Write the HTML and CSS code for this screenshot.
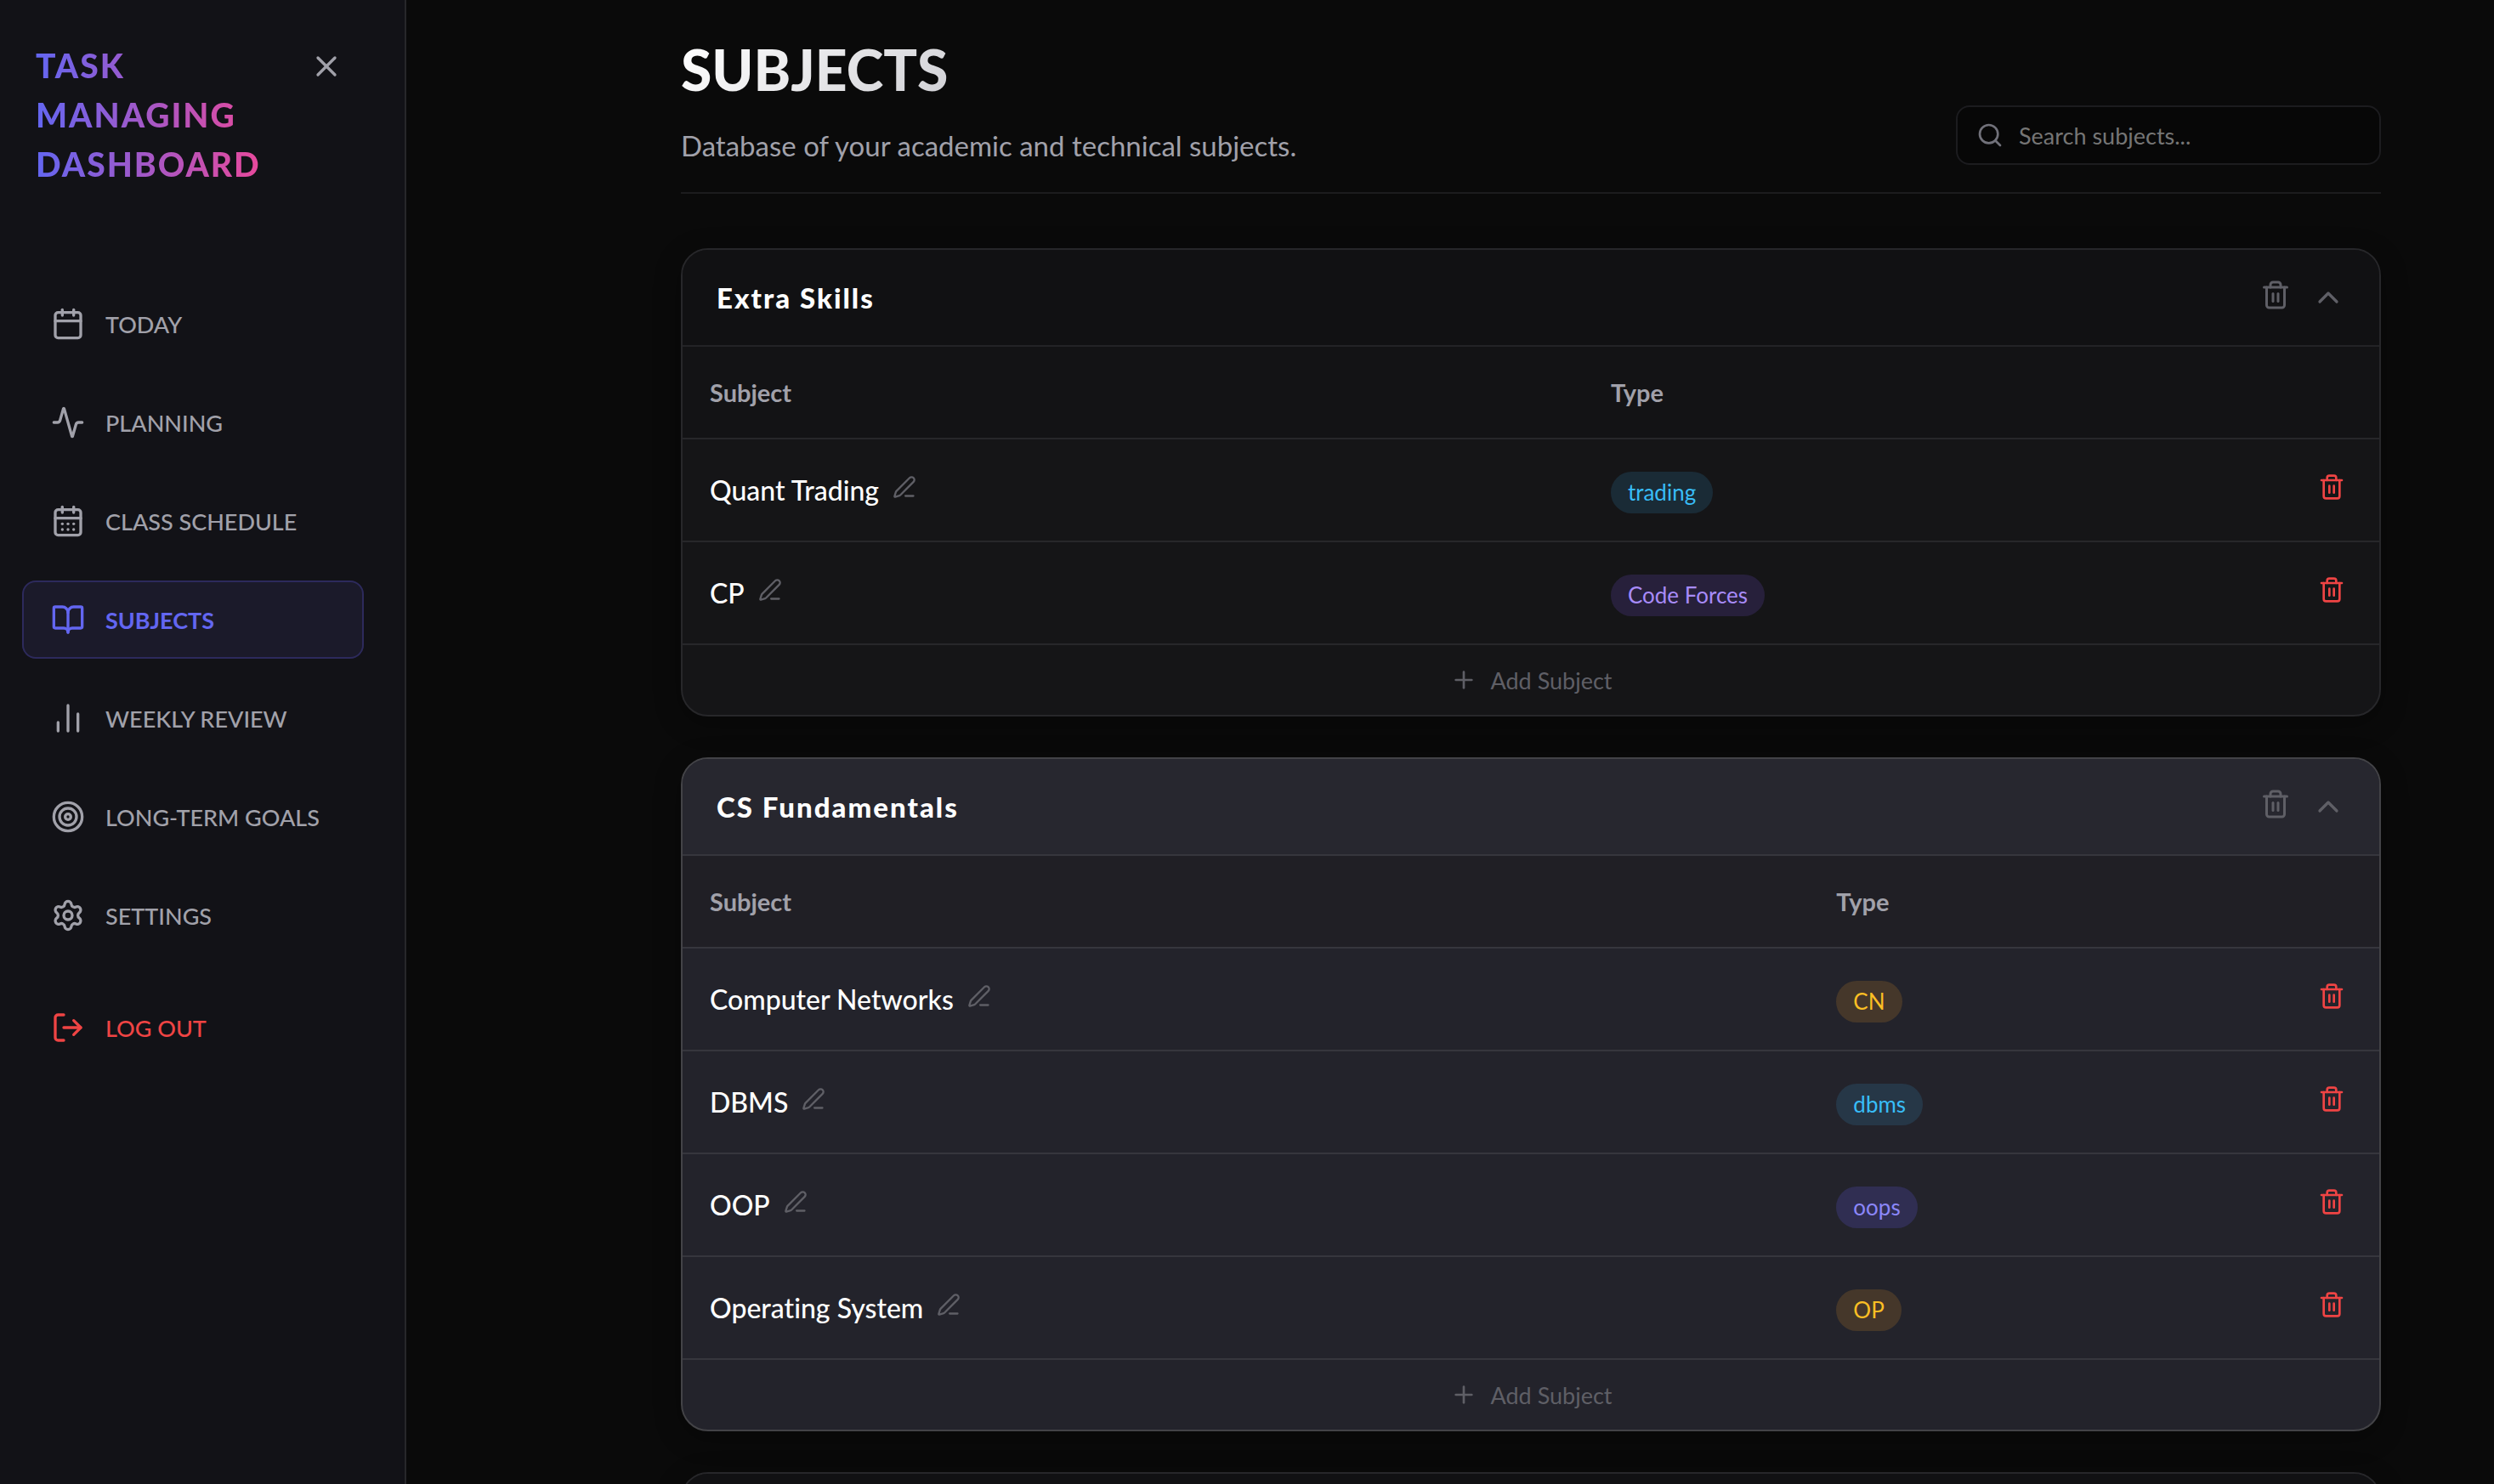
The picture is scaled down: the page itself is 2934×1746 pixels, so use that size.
FILE: index.html
```
<!DOCTYPE html>
<html lang="en">
<head>
<meta charset="utf-8">
<title>Subjects</title>
<link rel="stylesheet" href="styles.css">
</head>
<body>
<!-- icon set -->
<svg class="sprite" aria-hidden="true">
	<symbol id="i-x" viewBox="0 0 24 24"><path d="M18 6 6 18"/><path d="m6 6 12 12"/></symbol>
	<symbol id="i-calendar" viewBox="0 0 24 24"><path d="M8 2v4"/><path d="M16 2v4"/><rect width="18" height="18" x="3" y="4" rx="2"/><path d="M3 10h18"/></symbol>
	<symbol id="i-activity" viewBox="0 0 24 24"><path d="M22 12h-2.48a2 2 0 0 0-1.93 1.46l-2.35 8.36a.25.25 0 0 1-.48 0L9.24 2.18a.25.25 0 0 0-.48 0l-2.35 8.36A2 2 0 0 1 4.49 12H2"/></symbol>
	<symbol id="i-days" viewBox="0 0 24 24"><path d="M8 2v4"/><path d="M16 2v4"/><rect width="18" height="18" x="3" y="4" rx="2"/><path d="M3 10h18"/><path d="M8 14h.01"/><path d="M12 14h.01"/><path d="M16 14h.01"/><path d="M8 18h.01"/><path d="M12 18h.01"/><path d="M16 18h.01"/></symbol>
	<symbol id="i-book" viewBox="0 0 24 24"><path d="M12 7v14"/><path d="M3 18a1 1 0 0 1-1-1V4a1 1 0 0 1 1-1h5a4 4 0 0 1 4 4 4 4 0 0 1 4-4h5a1 1 0 0 1 1 1v13a1 1 0 0 1-1 1h-6a3 3 0 0 0-3 3 3 3 0 0 0-3-3z"/></symbol>
	<symbol id="i-bars" viewBox="0 0 24 24"><path d="M5 21v-6"/><path d="M12 21V3"/><path d="M19 21V9"/></symbol>
	<symbol id="i-target" viewBox="0 0 24 24"><circle cx="12" cy="12" r="10"/><circle cx="12" cy="12" r="6"/><circle cx="12" cy="12" r="2"/></symbol>
	<symbol id="i-settings" viewBox="0 0 24 24"><path d="M9.671 4.136a2.34 2.34 0 0 1 4.659 0 2.34 2.34 0 0 0 3.319 1.915 2.34 2.34 0 0 1 2.33 4.033 2.34 2.34 0 0 0 0 3.831 2.34 2.34 0 0 1-2.33 4.033 2.34 2.34 0 0 0-3.319 1.915 2.34 2.34 0 0 1-4.659 0 2.34 2.34 0 0 0-3.32-1.915 2.34 2.34 0 0 1-2.33-4.033 2.34 2.34 0 0 0 0-3.831A2.34 2.34 0 0 1 6.35 6.051a2.34 2.34 0 0 0 3.319-1.915"/><circle cx="12" cy="12" r="3"/></symbol>
	<symbol id="i-logout" viewBox="0 0 24 24"><path d="m16 17 5-5-5-5"/><path d="M21 12H9"/><path d="M9 21H5a2 2 0 0 1-2-2V5a2 2 0 0 1 2-2h4"/></symbol>
	<symbol id="i-search" viewBox="0 0 24 24"><path d="m21 21-4.34-4.34"/><circle cx="11" cy="11" r="8"/></symbol>
	<symbol id="i-trash" viewBox="0 0 24 24"><path d="M10 11v6"/><path d="M14 11v6"/><path d="M19 6v14a2 2 0 0 1-2 2H7a2 2 0 0 1-2-2V6"/><path d="M3 6h18"/><path d="M8 6V4a2 2 0 0 1 2-2h4a2 2 0 0 1 2 2v2"/></symbol>
	<symbol id="i-up" viewBox="0 0 24 24"><path d="m18 15-6-6-6 6"/></symbol>
	<symbol id="i-pen" viewBox="0 0 24 24"><path d="M13 21h8"/><path d="M21.174 6.812a1 1 0 0 0-3.986-3.987L3.842 16.174a2 2 0 0 0-.5.83l-1.321 4.352a.5.5 0 0 0 .623.622l4.353-1.32a2 2 0 0 0 .83-.497z"/></symbol>
	<symbol id="i-plus" viewBox="0 0 24 24"><path d="M5 12h14"/><path d="M12 5v14"/></symbol>
</svg>

<div class="app">
	<aside class="sidebar">
		<div class="brand">
			<div class="brand-name">TASK MANAGING DASHBOARD</div>
			<button class="icon-btn close" type="button" aria-label="Close"><svg class="icon icon-lg"><use href="#i-x"/></svg></button>
		</div>
		<nav class="nav">
			<a class="nav-link" href="#"><svg class="icon icon-lg"><use href="#i-calendar"/></svg>TODAY</a>
			<a class="nav-link" href="#"><svg class="icon icon-lg"><use href="#i-activity"/></svg>PLANNING</a>
			<a class="nav-link" href="#"><svg class="icon icon-lg"><use href="#i-days"/></svg>CLASS SCHEDULE</a>
			<a class="nav-link active" href="#"><svg class="icon icon-lg"><use href="#i-book"/></svg>SUBJECTS</a>
			<a class="nav-link" href="#"><svg class="icon icon-lg"><use href="#i-bars"/></svg>WEEKLY REVIEW</a>
			<a class="nav-link" href="#"><svg class="icon icon-lg"><use href="#i-target"/></svg>LONG-TERM GOALS</a>
			<a class="nav-link" href="#"><svg class="icon icon-lg"><use href="#i-settings"/></svg>SETTINGS</a>
			<button class="nav-link logout" type="button"><svg class="icon icon-lg"><use href="#i-logout"/></svg>LOG OUT</button>
		</nav>
	</aside>

	<main class="main">
		<div class="content">
			<header class="page-header">
				<div class="page-heading">
					<h1>SUBJECTS</h1>
					<p>Database of your academic and technical subjects.</p>
				</div>
				<label class="search">
					<svg class="icon icon-sm"><use href="#i-search"/></svg>
					<input type="text" placeholder="Search subjects..." aria-label="Search subjects">
				</label>
			</header>

			<section class="card">
				<div class="card-header">
					<h2>Extra Skills</h2>
					<div class="card-actions">
						<button class="icon-btn raised" type="button" aria-label="Delete category"><svg class="icon icon-md"><use href="#i-trash"/></svg></button>
						<button class="icon-btn" type="button" aria-label="Collapse"><svg class="icon icon-lg"><use href="#i-up"/></svg></button>
					</div>
				</div>
				<table class="subjects">
					<colgroup><col class="col-narrow"><col><col class="col-action"></colgroup>
					<thead>
						<tr><th>Subject</th><th>Type</th><th></th></tr>
					</thead>
					<tbody>
						<tr>
							<td><div class="name">Quant Trading<button class="icon-btn pen" type="button" aria-label="Edit"><svg class="icon icon-xs"><use href="#i-pen"/></svg></button></div></td>
							<td><span class="tag blue">trading</span></td>
							<td class="action"><button class="icon-btn delete" type="button" aria-label="Delete"><svg class="icon icon-sm"><use href="#i-trash"/></svg></button></td>
						</tr>
						<tr>
							<td><div class="name">CP<button class="icon-btn pen" type="button" aria-label="Edit"><svg class="icon icon-xs"><use href="#i-pen"/></svg></button></div></td>
							<td><span class="tag purple">Code Forces</span></td>
							<td class="action"><button class="icon-btn delete" type="button" aria-label="Delete"><svg class="icon icon-sm"><use href="#i-trash"/></svg></button></td>
						</tr>
					</tbody>
				</table>
				<button class="add" type="button"><svg class="icon icon-sm"><use href="#i-plus"/></svg>Add Subject</button>
			</section>

			<section class="card highlight">
				<div class="card-header">
					<h2>CS Fundamentals</h2>
					<div class="card-actions">
						<button class="icon-btn raised" type="button" aria-label="Delete category"><svg class="icon icon-md"><use href="#i-trash"/></svg></button>
						<button class="icon-btn" type="button" aria-label="Collapse"><svg class="icon icon-lg"><use href="#i-up"/></svg></button>
					</div>
				</div>
				<table class="subjects">
					<colgroup><col class="col-wide"><col><col class="col-action"></colgroup>
					<thead>
						<tr><th>Subject</th><th>Type</th><th></th></tr>
					</thead>
					<tbody>
						<tr>
							<td><div class="name">Computer Networks<button class="icon-btn pen" type="button" aria-label="Edit"><svg class="icon icon-xs"><use href="#i-pen"/></svg></button></div></td>
							<td><span class="tag amber">CN</span></td>
							<td class="action"><button class="icon-btn delete" type="button" aria-label="Delete"><svg class="icon icon-sm"><use href="#i-trash"/></svg></button></td>
						</tr>
						<tr>
							<td><div class="name">DBMS<button class="icon-btn pen" type="button" aria-label="Edit"><svg class="icon icon-xs"><use href="#i-pen"/></svg></button></div></td>
							<td><span class="tag blue">dbms</span></td>
							<td class="action"><button class="icon-btn delete" type="button" aria-label="Delete"><svg class="icon icon-sm"><use href="#i-trash"/></svg></button></td>
						</tr>
						<tr>
							<td><div class="name">OOP<button class="icon-btn pen" type="button" aria-label="Edit"><svg class="icon icon-xs"><use href="#i-pen"/></svg></button></div></td>
							<td><span class="tag indigo">oops</span></td>
							<td class="action"><button class="icon-btn delete" type="button" aria-label="Delete"><svg class="icon icon-sm"><use href="#i-trash"/></svg></button></td>
						</tr>
						<tr>
							<td><div class="name">Operating System<button class="icon-btn pen" type="button" aria-label="Edit"><svg class="icon icon-xs"><use href="#i-pen"/></svg></button></div></td>
							<td><span class="tag amber">OP</span></td>
							<td class="action"><button class="icon-btn delete" type="button" aria-label="Delete"><svg class="icon icon-sm"><use href="#i-trash"/></svg></button></td>
						</tr>
					</tbody>
				</table>
				<button class="add" type="button"><svg class="icon icon-sm"><use href="#i-plus"/></svg>Add Subject</button>
			</section>

			<section class="card">
				<div class="card-header"></div>
			</section>
		</div>
	</main>
</div>
</body>
</html>
```
FILE: styles.css
```
*{
	box-sizing:border-box;
}
body{
	margin:0;
	background:#0a0a0a;
	color:#fff;
	font-family:Lato, "Open Sans", sans-serif;
	font-variant-ligatures:none;
}
h1, h2, p{
	margin:0;
}
button, input{
	font-family:inherit;
}
.sprite{
	display:none;
}

/* icons */
.icon{
	display:block;
	flex:none;
	fill:none;
	stroke:currentColor;
	stroke-width:2;
	stroke-linecap:round;
	stroke-linejoin:round;
}
.icon-xs{
	width:28px;
	height:28px;
}
.icon-sm{
	width:32px;
	height:32px;
}
.icon-md{
	width:36px;
	height:36px;
}
.icon-lg{
	width:40px;
	height:40px;
}
.icon-btn{
	padding:0;
	border:0;
	background:none;
	color:#5f5f66;
	cursor:pointer;
}

.app{
	display:flex;
	height:100vh;
	overflow:hidden;
}

/* sidebar */
.sidebar{
	flex:none;
	width:478px;
	background:#121217;
	border-right:2px solid #27272a;
}
.brand{
	display:flex;
	justify-content:space-between;
	align-items:flex-start;
	padding:48px 72px 0 42px;
	margin-bottom:113px;
}
.brand-name{
	width:min-content;
	padding-right:8px;
	font-size:39px;
	font-weight:900;
	line-height:58px;
	letter-spacing:2px;
	background:linear-gradient(to right, #6366f1, #ec4899);
	-webkit-background-clip:text;
	background-clip:text;
	color:transparent;
}
.close{
	margin-top:10px;
	color:#a1a1aa;
}
.nav{
	display:flex;
	flex-direction:column;
	gap:24px;
	padding:0 48px 0 26px;
}
.nav-link{
	display:flex;
	align-items:center;
	gap:24px;
	height:92px;
	padding:0 32px;
	border:2px solid transparent;
	border-radius:16px;
	background:none;
	color:#a1a1aa;
	font-size:27px;
	font-weight:500;
	text-decoration:none;
	white-space:nowrap;
}
.nav-link.active{
	background:#1b1a2a;
	border-color:#2d2a5c;
	color:#6366f1;
	font-weight:700;
}
.nav-link.logout{
	margin-top:16px;
	color:#ef4444;
	cursor:pointer;
}

/* page */
.main{
	flex:1;
	min-width:0;
	padding:44px 0 0 190px;
}
.content{
	max-width:2000px;
	margin:0 auto;
}
.page-header{
	display:flex;
	justify-content:space-between;
	align-items:flex-end;
	padding-bottom:32px;
	margin-bottom:64px;
	border-bottom:2px solid #1c1c1e;
}
.page-heading h1{
	margin-bottom:28px;
	font-size:66px;
	font-weight:900;
	line-height:76px;
	background:linear-gradient(135deg, #fff, #a1a1aa);
	-webkit-background-clip:text;
	background-clip:text;
	color:transparent;
}
.page-heading p{
	font-size:33px;
	line-height:46px;
	color:#a1a1aa;
}
.search{
	display:flex;
	align-items:center;
	gap:18px;
	width:500px;
	height:70px;
	padding:0 22px;
	border:2px solid #1c1c1f;
	border-radius:16px;
	background:#070707;
	color:#71717a;
}
.search input{
	flex:1;
	min-width:0;
	padding:0;
	border:0;
	outline:0;
	background:none;
	color:#fff;
	font-size:27px;
}
.search input::placeholder{
	color:#757575;
}

/* cards */
.card{
	margin-bottom:48px;
	border:2px solid #27272a;
	border-radius:32px;
	background:#151517;
	box-shadow:0 8px 32px rgba(0,0,0,0.3);
	overflow:hidden;
}
.card-header{
	display:flex;
	justify-content:space-between;
	align-items:center;
	height:114px;
	padding:0 40px;
	border-bottom:2px solid #232326;
	background:#111113;
}
.card-header h2{
	font-size:33px;
	font-weight:900;
	letter-spacing:2px;
}
.card-actions{
	display:flex;
	align-items:center;
	gap:24px;
}
.raised{
	padding-bottom:6px;
}
.subjects{
	width:100%;
	table-layout:fixed;
	border-collapse:separate;
	border-spacing:0;
}
.col-narrow{
	width:53.1%;
}
.col-wide{
	width:66.4%;
}
.col-action{
	width:140px;
}
.subjects th{
	height:109px;
	padding:0 32px;
	border-bottom:2px solid #27272a;
	background:#131315;
	color:#a1a1aa;
	font-size:29px;
	font-weight:700;
	text-align:left;
}
.subjects td{
	height:121px;
	padding:0 32px;
	border-bottom:2px solid #27272a;
}
.name{
	display:flex;
	align-items:center;
	gap:16px;
	font-size:32px;
	font-weight:500;
}
.pen{
	padding-bottom:8px;
}
.subjects .action{
	padding:0 40px 8px 0;
}
.delete{
	display:block;
	margin-left:auto;
	color:#ef4444;
}
.tag{
	display:inline-block;
	margin-top:6px;
	padding:0 20px;
	border-radius:25px;
	font-size:26px;
	line-height:49px;
	vertical-align:middle;
}
.blue{
	background:rgba(56,180,248,0.14);
	color:#38bdf8;
}
.purple{
	background:rgba(139,92,246,0.16);
	color:#a78bfa;
}
.indigo{
	background:rgba(99,92,241,0.2);
	color:#8b87fa;
}
.amber{
	background:rgba(251,160,36,0.16);
	color:#fbbf24;
}
.add{
	display:flex;
	justify-content:center;
	align-items:center;
	gap:16px;
	width:100%;
	height:82px;
	padding:0;
	border:0;
	background:none;
	color:#5f5f66;
	font-size:27px;
	cursor:pointer;
}

.highlight{
	border-color:#434347;
	background:#23232b;
}
.highlight .card-header{
	border-color:#36363d;
	background:#27272f;
}
.highlight .subjects th{
	border-color:#36363d;
	background:#201f25;
}
.highlight .subjects td{
	border-color:#36363d;
}
```
